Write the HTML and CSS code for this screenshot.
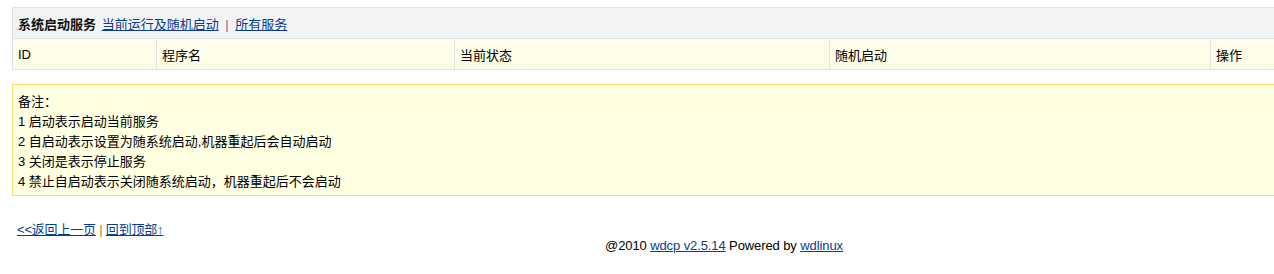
FILE: index.html
```html
<!DOCTYPE html>
<html lang="zh-CN">
<head>
    <meta charset="UTF-8">
    <title>系统启动服务</title>
    <link rel="stylesheet" href="styles.css">
</head>
<body>

<div class="wrap">
    <table class="list">
        <tr>
            <td colspan="5" class="title">
                <b>系统启动服务</b>
                <a href="#">当前运行及随机启动</a> <span class="sep">|</span> <a href="#">所有服务</a>
            </td>
        </tr>
        <tr class="head">
            <td class="c-id">ID</td>
            <td class="c-name">程序名</td>
            <td class="c-state">当前状态</td>
            <td class="c-auto">随机启动</td>
            <td class="c-op">操作</td>
        </tr>
    </table>

    <!-- 备注 -->
    <div class="note">
        <div>备注：</div>
        <div>1&nbsp;启动表示启动当前服务</div>
        <div>2&nbsp;自启动表示设置为随系统启动,机器重起后会自动启动</div>
        <div>3&nbsp;关闭是表示停止服务</div>
        <div>4&nbsp;禁止自启动表示关闭随系统启动，机器重起后不会启动</div>
    </div>

    <div class="back">
        <a href="#">&lt;&lt;返回上一页</a> <span class="sep">|</span> <a href="#">回到顶部↑</a>
    </div>

    <div class="footer">
        @2010 <a href="#">wdcp&nbsp;v2.5.14</a> Powered by <a href="#">wdlinux</a>
    </div>
</div>

</body>
</html>
```

FILE: styles.css
```css
html, body {
    overflow: hidden;
}
body {
    margin: 0;
    font-family: "Liberation Sans", "Noto Sans CJK SC", sans-serif;
    font-size: 12px;
    color: #000;
}
a {
    color: #0a3c8f;
    text-decoration: underline;
}
.sep {
    color: #6a7590;
    padding: 0 3px;
}
.wrap {
    width: 1424px;
    padding: 7px 0 0 12px;
}
.list {
    width: 100%;
    border-collapse: collapse;
    border: 1px solid #dfe2e7;
}
.list td {
    height: 30px;
    padding: 0 0 0 5px;
    font-size: 13px;
    border: 1px solid #dfe2e7;
}
.title {
    background-color: #f2f3f5;
}
.title b {
    color: #111;
    margin-right: 2px;
}
.head td {
    background-color: #fefee8;
}
.c-id { width: 138px; }
.c-name { width: 292px; }
.c-state { width: 369px; }
.c-auto { width: 375px; }
.note {
    margin-top: 14px;
    padding: 7px 5px 3px;
    background-color: #ffffe2;
    border: 1px solid #ffdc6a;
    font-size: 13px;
    line-height: 20px;
}
.back {
    margin-top: 23px;
    padding-left: 5px;
    font-size: 13px;
    letter-spacing: -0.2px;
}
.back .sep {
    color: #b37a2a;
    padding: 0;
}
.footer {
    text-align: center;
    font-size: 13px;
    letter-spacing: -0.1px;
}
```
